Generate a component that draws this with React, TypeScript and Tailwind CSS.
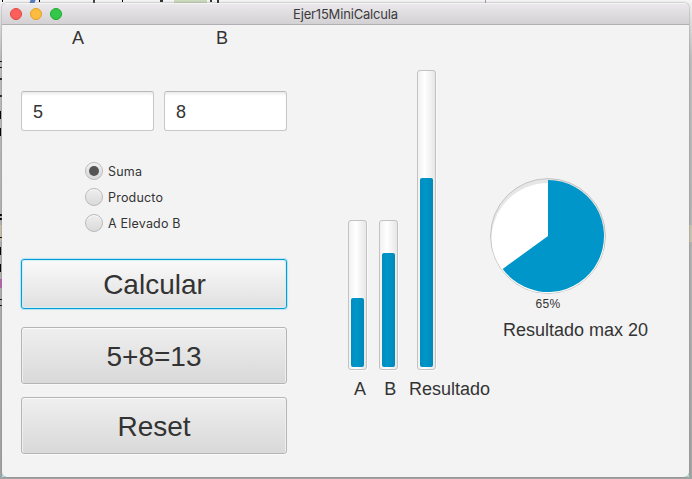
import React from "react";

const sans = "font-['Liberation_Sans',Arial,sans-serif]";
const ui = "font-[Inter,'Liberation_Sans',sans-serif]";

function TitleBar() {
  return (
    <header className="relative flex h-[22px] shrink-0 items-center justify-center border-b border-[#b1afb1] bg-linear-to-b from-[#ebe9eb] to-[#d3d1d3] shadow-[inset_0_1px_0_#f6f5f6]">
      <div className="absolute left-2 top-[5px] flex gap-2">
        <span className="size-3 rounded-full border border-[#e2463f] bg-[#fc605c]" />
        <span className="size-3 rounded-full border border-[#dfa023] bg-[#fdbc40]" />
        <span className="size-3 rounded-full border border-[#1fa72f] bg-[#34c84a]" />
      </div>
      <h1 className={`${ui} pt-px text-[13px] leading-[20px] tracking-[-0.17px] text-[#3c3a3c]`}>Ejer15MiniCalcula</h1>
    </header>
  );
}

function Field({ value, width }: { value: string; width: string }) {
  return (
    <div className={`${width} flex h-10 items-center rounded-[3px] border border-[#c8c8c8] border-t-[#b8b8b8] bg-white pl-[11px] pt-[2px] text-[18px] shadow-[inset_0_3px_3px_-1px_#ebebeb]`}>
      {value}
    </div>
  );
}

function Radio({ label, checked = false }: { label: string; checked?: boolean }) {
  return (
    <div className="flex h-[18px] items-center gap-[5px]">
      <span className="flex size-[18px] items-center justify-center rounded-full border border-[#b9b9b9] bg-linear-to-b from-[#eeeeee] to-[#dadada] shadow-[inset_0_1px_0_#fafafa]">
        {checked && <span className="size-[10px] rounded-full bg-[#555]" />}
      </span>
      <span className={`${ui} whitespace-nowrap pt-px text-[12.5px] leading-4 tracking-[0.2px]`}>{label}</span>
    </div>
  );
}

function Bar({ height, fill }: { height: string; fill: string }) {
  return (
    <div className={`${height} flex w-[19px] flex-col justify-end rounded-[3px] border border-[#c2c2c2] bg-linear-to-r from-[#f1f1f1] via-white via-40% to-[#e7e7e7] px-[2px] pb-[2px] shadow-[1px_1px_0_#fafafa]`}>
      <div className={`${fill} rounded-[2px] bg-linear-to-r from-[#008dbd] via-[#0096c9] via-40% to-[#0089b8]`} />
    </div>
  );
}

function Button({ children, className }: { children: React.ReactNode; className: string }) {
  return (
    <button className={`${className} flex w-full items-center justify-center rounded-[3px] border text-[28px] leading-8`}>
      {children}
    </button>
  );
}

const plainButton = "h-[57px] border-[#b5b5b5] bg-linear-to-b from-[#efefef] to-[#d9d9d9] pt-[2px] shadow-[inset_0_1px_0_#fafafa,inset_1px_0_0_#efefef,inset_-1px_0_0_#efefef,0_1px_0_#fafafa]";

function Backdrop() {
  return (
    <div className="absolute inset-0 overflow-hidden bg-linear-to-b from-[#f4f4f4] via-[#bebebe] via-12% to-[#a3a3a3]" aria-hidden="true">
      <div className="absolute inset-x-0 top-0 h-[3px] bg-[#f4f4f4]" />
      <div className="absolute left-[174px] top-0 h-[3px] w-[33px] bg-[#cbdabd]" />
      <div className="absolute left-[485px] top-0 h-[3px] w-px bg-[#b492b5]" />
      <div className="absolute left-[2px] top-0 h-[2px] w-px bg-black" />
      <div className="absolute left-[30px] top-0 h-[3px] w-[5px] skew-x-[-20deg] bg-[#537cc8]" />
      <div className="absolute left-[39px] top-0 h-[2px] w-px bg-black" />
      <div className="absolute left-[93px] top-0 h-[3px] w-[2px] bg-[#444]" />
      <div className="absolute left-[122px] top-0 h-[2px] w-px bg-black" />
      <div className="absolute left-[160px] top-0 h-[2px] w-[3px] bg-[#333]" />
      <div className="absolute left-[210px] top-0 h-[2px] w-[2px] bg-[#333]" />
      <div className="absolute left-[217px] top-0 h-[3px] w-[2px] bg-[#333]" />
      <div className="absolute left-0 top-[61px] h-[7px] w-[2px] border-y border-black" />
      <div className="absolute left-0 top-[78px] h-[2px] w-[2px] bg-[#222]" />
      <div className="absolute left-0 top-[95px] h-[2px] w-[2px] bg-[#222]" />
      <div className="absolute left-0 top-[111px] h-[8px] w-px bg-black" />
      <div className="absolute left-0 top-[128px] h-[8px] w-px bg-black" />
      <div className="absolute left-0 top-[214px] h-[6px] w-[2px] border-y-2 border-black" />
      <div className="absolute left-0 top-[225px] h-[16px] w-[2px] bg-[#c9c1ab]" />
      <div className="absolute left-0 top-[237px] h-px w-[2px] bg-black" />
      <div className="absolute left-0 top-[247px] h-[8px] w-px bg-black" />
      <div className="absolute left-0 top-[264px] h-[8px] w-px bg-black" />
      <div className="absolute left-0 top-[279px] h-[9px] w-[2px] bg-[#b864ab]" />
      <div className="absolute left-0 top-[299px] h-[7px] w-[2px] border-y border-black" />
      <div className="absolute right-0 top-[225px] h-[17px] w-[3px] bg-[#c9c3ae]" />
      <div className="absolute bottom-[2px] left-[2px] size-[5px] bg-[#9ff5f2]" />
      <div className="absolute bottom-[2px] right-[3px] size-[5px] bg-[#9ff5f2]" />
    </div>
  );
}

export default function App() {
  return (
    <div className={`${sans} relative h-[479px] w-[692px] overflow-hidden pb-[2px] pl-[2px] pr-[3px] pt-[3px] text-[#333]`}>
      <Backdrop />
      <main className="relative flex h-[474px] flex-col overflow-hidden rounded-[5px] bg-[#f3f3f3] shadow-[0_0_2px_#777]">
        <TitleBar />
        <div className="flex flex-1">
          <section className="ml-[19px] w-[266px] shrink-0">
            <div className="flex h-[66px] pl-[51px] pt-[2px] text-[18px] leading-[22px]">
              <span className="w-[144px]">A</span>
              <span>B</span>
            </div>
            <div className="flex gap-[10px]">
              <Field value="5" width="w-[133px]" />
              <Field value="8" width="w-[123px]" />
            </div>
            <div className="mb-[27px] ml-16 mt-[31px] flex flex-col gap-2">
              <Radio label="Suma" checked />
              <Radio label="Producto" />
              <Radio label="A Elevado B" />
            </div>
            <Button className="h-[50px] border-[#039ed3] bg-linear-to-b from-[#fafafa] to-[#e0e0e0] pl-px pt-px shadow-[0_0_1px_1px_#b9e3f1,inset_0_0_1px_1px_#d5eef6]">Calcular</Button>
            <div className="mt-[18px] flex flex-col gap-[13px]">
              <Button className={plainButton}>5+8=13</Button>
              <Button className={plainButton}>Reset</Button>
            </div>
          </section>

          <section className="ml-[61px] w-[142px] shrink-0 pt-[45px]">
            <div className="flex h-[300px] items-end">
              <Bar height="h-[150px]" fill="h-[69px]" />
              <div className="w-3" />
              <Bar height="h-[150px]" fill="h-[114px]" />
              <div className="w-[19px]" />
              <Bar height="h-[300px]" fill="h-[189px]" />
            </div>
            <div className="flex pl-[6px] pt-[8px] text-[18px] leading-[22px]">
              <span className="w-[31px]">A</span>
              <span className="w-[25.5px]">B</span>
              <span>Resultado</span>
            </div>
          </section>

          <section className="flex w-[116px] flex-col items-center pt-[153px]">
            <svg className="shrink-0" width="116" height="116" viewBox="0 0 116 116">
              <defs>
                <clipPath id="well"><circle cx="58" cy="58" r="57" /></clipPath>
              </defs>
              <circle cx="58" cy="58" r="57.4" fill="#e6e6e6" stroke="#c3c3c3" />
              <circle cx="58" cy="61.5" r="56.5" fill="#fff" clipPath="url(#well)" />
              <path d="M58 58V2A56 56 0 1 1 12.7 90.9Z" fill="#0096c9" />
            </svg>
            <span className="mt-[2px] text-[12px] leading-4 tracking-[0.3px]">65%</span>
            <span className="ml-[55px] mt-[7px] whitespace-nowrap text-[18px] leading-[22px]">Resultado max 20</span>
          </section>
        </div>
      </main>
    </div>
  );
}
